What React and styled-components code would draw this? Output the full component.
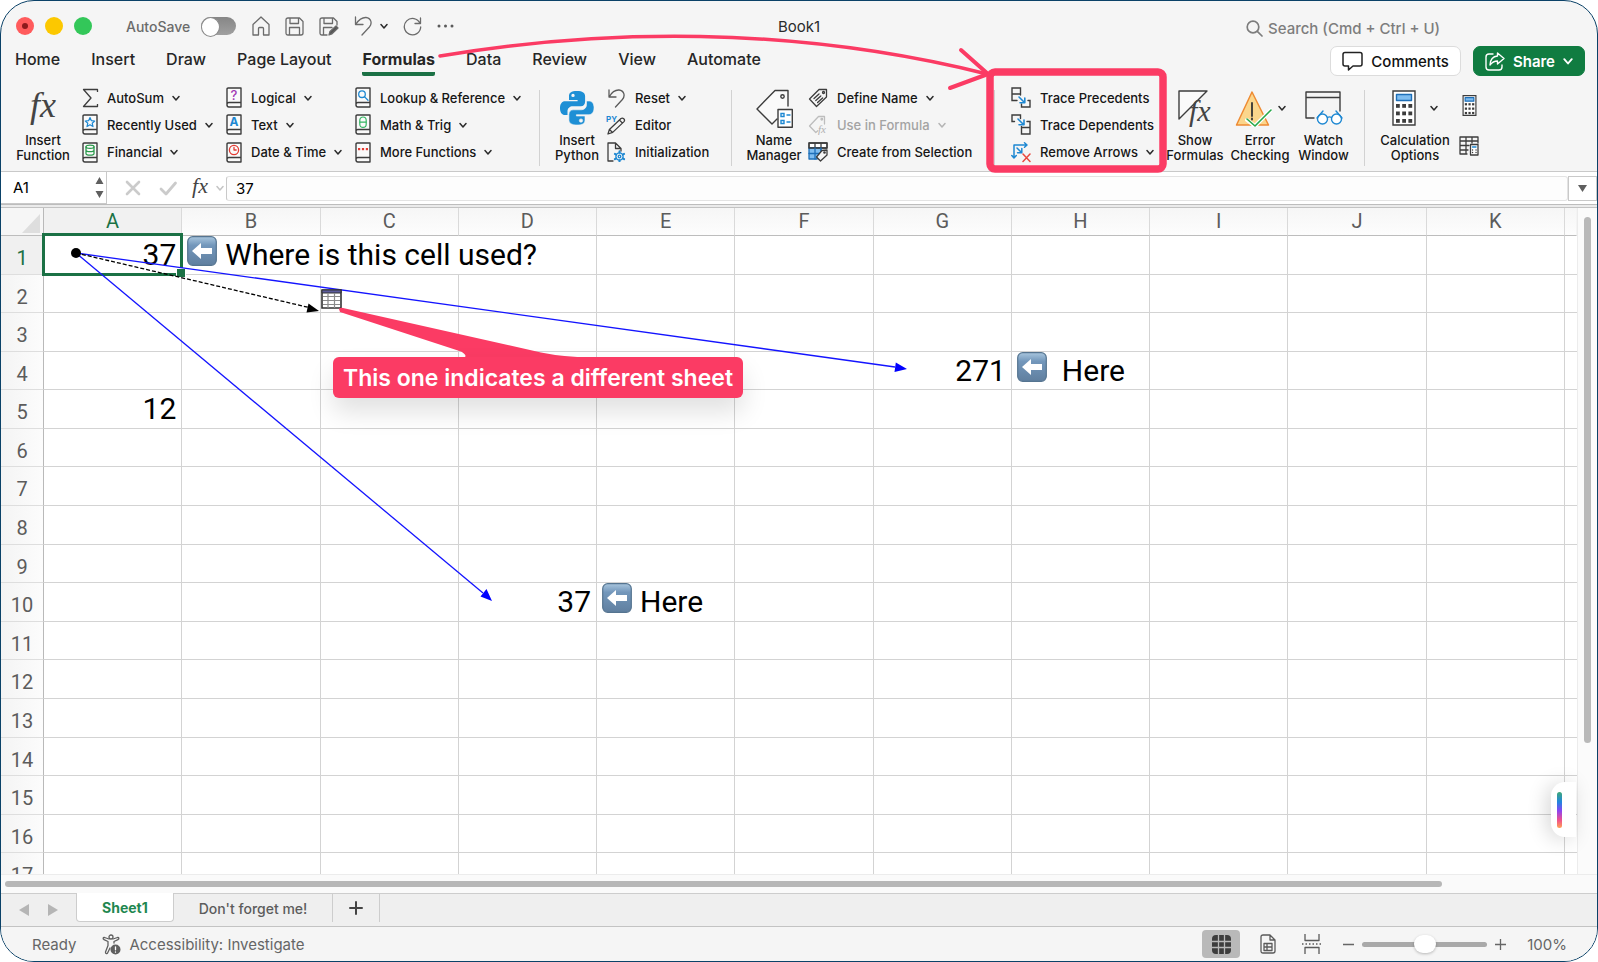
import React, { useState } from 'react'
import styled, { createGlobalStyle } from 'styled-components';


const GlobalStyle = createGlobalStyle`
    * {
        box-sizing: border-box;
    }
    body {
        margin: 0;
        background: #ffffff;
        font-family: Inter, "Liberation Sans", sans-serif;
        color: #1f1f1f;
    }
    button, input {
        font: inherit;
        color: inherit;
        margin: 0;
        padding: 0;
        border: 0;
        background: none;
    }
    svg {
        display: block;
        flex: none;
    }
`;

const Frame = styled.div`
    position: relative;
    display: flex;
    flex-direction: column;
    height: 100vh;
    border: 1px solid #0b4268;
    border-radius: 34px;
    overflow: hidden;
    background: #f5f5f5;
`;

/* ---------- title bar ---------- */

const TitleBar = styled.header`
    display: grid;
    grid-template-columns: 1fr auto 1fr;
    align-items: center;
    height: 44px;
    padding: 6px 15px 0;
`;
const TitleSide = styled.div`
    display: flex;
    align-items: center;
    color: #6b6b6b;
`;
const Lights = styled.div`
    display: flex;
    gap: 11px;
    margin-right: 34px;
`;
const Light = styled.button`
    display: flex;
    align-items: center;
    justify-content: center;
    width: 18px;
    height: 18px;
    border-radius: 50%;
    background: ${props => props.$color};

    &::after {
        content: "";
        width: 6px;
        height: 6px;
        border-radius: 50%;
        background: ${props => props.$dot || 'transparent'};
    }
`;
const AutoSave = styled.label`
    display: flex;
    align-items: center;
    gap: 11px;
    margin-right: 16px;
    font-size: 14px;
    font-weight: 500;
`;
const Toggle = styled.input`
    appearance: none;
    width: 35px;
    height: 18px;
    border-radius: 9px;
    background: linear-gradient(#868686, #a0a0a0);

    &::before {
        content: "";
        display: block;
        width: 17px;
        height: 18px;
        border: 1px solid #8a8a8a;
        border-radius: 50%;
        background: #ffffff;
    }
`;
const IconButton = styled.button`
    display: flex;
    align-items: center;
    justify-content: center;
    gap: 4px;
`;
const QuickTools = styled.div`
    display: flex;
    align-items: center;
    gap: 15px;
`;
const UndoPair = styled.div`
    display: flex;
    align-items: center;
    gap: 8px;
`;
const BookTitle = styled.h1`
    margin: 0;
    font-size: 15px;
    font-weight: 400;
    color: #2b2b2b;
`;
const Search = styled.label`
    display: flex;
    align-items: center;
    gap: 5px;
    width: 336px;
    margin-left: auto;
    padding-top: 4px;
    color: #7d7d7d;
`;
const SearchInput = styled.input`
    flex: 1;
    min-width: 0;
    font-size: 15px;
    font-weight: 500;
    outline: none;

    &::placeholder {
        color: #7d7d7d;
        opacity: 1;
    }
`;

/* ---------- ribbon tabs ---------- */

const TabRow = styled.div`
    display: flex;
    align-items: center;
    justify-content: space-between;
    height: 32px;
    padding: 0 12px 0 14px;
`;
const Tabs = styled.nav`
    display: flex;
    gap: 31px;
`;
const Tab = styled.button`
    height: 30px;
    padding: 3px 0;
    border-bottom: 4px solid ${props => (props.$active ? '#1b7145' : 'transparent')};
    border-radius: 2px;
    font-size: 16px;
    font-weight: ${props => (props.$active ? 700 : 500)};
    line-height: 20px;
    color: #262626;
`;
const TabActions = styled.div`
    display: flex;
    gap: 12px;
`;
const ActionButton = styled.button`
    display: flex;
    align-items: center;
    gap: 8px;
    height: 30px;
    padding: 0 11px;
    border: 1px solid ${props => (props.$primary ? '#107c41' : '#dcdcdc')};
    border-radius: 7px;
    background: ${props => (props.$primary ? '#107c41' : '#ffffff')};
    color: ${props => (props.$primary ? '#ffffff' : '#111111')};
    font-size: 15px;
    font-weight: ${props => (props.$primary ? 600 : 500)};
`;

/* ---------- ribbon ---------- */

const Ribbon = styled.div`
    display: flex;
    padding: 7px 14px 5px 14px;
    border-bottom: 1px solid #c9c9c9;
`;
const Stack = styled.div`
    display: flex;
    flex-direction: column;
    width: ${props => props.$width}px;
    height: 82px;
    margin-left: ${props => props.$before || 0}px;
`;
const SmallButton = styled.button`
    display: flex;
    flex: 1;
    align-items: center;
    gap: 8px;
    white-space: nowrap;
    font-size: 13px;
    font-weight: 500;
    color: ${props => (props.$dim ? '#a3a3a3' : '#161616')};
`;
const IconSlot = styled.span`
    display: flex;
    justify-content: center;
    width: ${props => (props.$wide ? 22 : 18)}px;
    flex: none;
`;
const BigButton = styled.button`
    display: flex;
    flex-direction: column;
    align-items: center;
    gap: 7px;
    width: ${props => props.$width}px;
    height: 82px;
    padding-top: 6px;
    font-size: 13px;
    font-weight: 500;
    line-height: 15px;
    color: #161616;
`;
const BigIcon = styled.span`
    display: flex;
    align-items: center;
    gap: ${props => props.$gap}px;
    height: 36px;
`;
const Divider = styled.div`
    width: 1px;
    height: 76px;
    margin: 6px ${props => props.$after}px 0 ${props => props.$before}px;
    background: #d2d2d2;
`;
const MiniStack = styled.div`
    display: flex;
    flex-direction: column;
    align-items: center;
    gap: 20px;
    padding-top: 11px;
    margin-left: 7px;
`;

/* ---------- formula bar ---------- */

const FormulaBar = styled.div`
    display: flex;
    align-items: center;
    height: 32px;
    background: #ffffff;
`;
const NameBox = styled.div`
    display: flex;
    align-items: center;
    width: 106px;
    height: 32px;
    padding: 0 2px 0 12px;
    border: 1px solid #c9c9c9;
    border-left: 0;
    border-top: 0;
`;
const NameInput = styled.input`
    flex: 1;
    min-width: 0;
    font-size: 15px;
    color: #000000;
    outline: none;
`;
const FormulaTools = styled.div`
    display: flex;
    align-items: center;
    gap: 6px;
    width: 119px;
    padding-left: 11px;
`;
const FormulaInput = styled.input`
    flex: 1;
    height: 25px;
    padding: 1px 0 0 9px;
    border: 1px solid #e3e3e3;
    border-left-color: #c9c9c9;
    border-radius: 3px;
    background: #fdfdfd;
    font-size: 15px;
    color: #000000;
    outline: none;
`;
const ExpandButton = styled.button`
    display: flex;
    align-items: center;
    justify-content: center;
    width: 29px;
    height: 25px;
    border: 1px solid #c9c9c9;
`;
const Seam = styled.div`
    height: 4px;
    border-top: 1px solid #bdbdbd;
    border-bottom: 1px solid #c3c3c3;
    background: #ebebeb;
`;

/* ---------- grid ---------- */

const GridArea = styled.main`
    position: relative;
    display: flex;
    flex: 1;
    min-height: 0;
    overflow: hidden;
    background: #ffffff;
    font-family: Roboto, sans-serif;
`;
const SheetPane = styled.div`
    flex: 1;
    min-width: 0;
`;
const Sheet = styled.table`
    width: 100%;
    height: 684px;
    table-layout: fixed;
    border-collapse: separate;
    border-spacing: 0;
`;
const Col = styled.col`
    width: ${props => props.$width}px;
`;
const CornerCell = styled.th`
    height: 28px;
    padding: 0 3px 2px 0;
    border-right: 1px solid #b9b9b9;
    border-bottom: 1px solid #bdbdbd;
    background: #f6f6f6;
    vertical-align: bottom;

    svg {
        margin-left: auto;
    }
`;
const ColumnHead = styled.th`
    height: 28px;
    padding: 0;
    border-right: 1px solid ${props => (props.$last ? '#f4f4f4' : '#dadada')};
    border-bottom: 1px solid #bdbdbd;
    background: ${props => (props.$active ? '#f1f1f1' : 'linear-gradient(#f6f6f6, #fdfdfd)')};
    font-size: 20px;
    font-weight: 400;
    line-height: 27px;
    color: ${props => (props.$active ? '#1b7145' : '#5c5c5c')};
`;
const RowHead = styled.th`
    padding: 7px 0 0;
    border-right: 1px solid #b9b9b9;
    border-bottom: 1px solid #dedede;
    background: ${props => (props.$active ? '#f0f0f0' : 'linear-gradient(90deg, #f4f4f4, #fcfcfc)')};
    vertical-align: top;
    font-size: 20px;
    font-weight: 400;
    line-height: 30px;
    color: ${props => (props.$active ? '#1b7145' : '#5c5c5c')};
`;
const Cell = styled.td`
    position: relative;
    padding: 0 5px;
    border-right: ${props => (props.$last ? 0 : 1)}px solid #d3d3d3;
    border-bottom: 1px solid #d3d3d3;
    vertical-align: top;
    text-align: ${props => (props.$number ? 'right' : 'left')};
    white-space: nowrap;
    font-size: 30px;
    line-height: 37px;
    color: #000000;
`;
const Selection = styled.span`
    position: absolute;
    inset: -3px -2px -2px -2px;
    z-index: 1;
    border: 3px solid #1b7145;

    &::after {
        content: "";
        position: absolute;
        right: -6px;
        bottom: -5px;
        width: 8px;
        height: 8px;
        border: 1px solid #ffffff;
        background: #1b7145;
    }
`;
const NoteText = styled.span`
    display: flex;
    gap: ${props => (props.$wide ? 15 : 8)}px;
`;
const Overlay = styled.svg`
    position: absolute;
    top: 0;
    left: 0;
    width: 100%;
    height: 100%;
    z-index: 2;
    pointer-events: none;
`;
const Callout = styled.div`
    position: absolute;
    z-index: 3;
    top: 149px;
    left: 332px;
    padding: 2px 10px 0;
    border-radius: 6px;
    background: #fb3b64;
    box-shadow: 0 14px 26px rgba(0, 0, 0, 0.12);
    font-family: Inter, sans-serif;
    font-size: 23px;
    font-weight: 600;
    line-height: 39px;
    color: #ffffff;
    white-space: nowrap;
`;
const SideScroll = styled.div`
    width: 20px;
    padding: 9px 5px 0 6px;
    border-left: 1px solid #ececec;
    background: #fbfbfb;
`;
const SideThumb = styled.div`
    width: 7px;
    height: 80%;
    border-radius: 4px;
    background: #b9b9b9;
`;
const CopilotTab = styled.button`
    position: absolute;
    z-index: 3;
    right: 21px;
    bottom: 37px;
    display: flex;
    align-items: center;
    width: 25px;
    height: 55px;
    padding-left: 6px;
    border-radius: 14px 0 0 14px;
    background: #ffffff;
    box-shadow: -4px 2px 20px rgba(0, 0, 0, 0.16);

    &::before {
        content: "";
        width: 5px;
        height: 36px;
        border-radius: 3px;
        background: linear-gradient(#3da877, #2185e0 28%, #8b45f2 52%, #f0518c 78%, #ffa154);
    }
`;
const BottomScroll = styled.div`
    height: 19px;
    padding: 6px 155px 0 4px;
    border-top: 1px solid #ececec;
    background: #fafafa;
`;
const BottomThumb = styled.div`
    height: 6px;
    border-radius: 3px;
    background: #b7b7b7;
`;

/* ---------- sheet tabs and status bar ---------- */

const SheetBar = styled.div`
    display: flex;
    height: 33px;
    border-top: 1px solid #cdcdcd;
    background: #efefef;
`;
const SheetArrows = styled.div`
    display: flex;
    align-items: center;
    gap: 19px;
    width: 75px;
    padding-left: 18px;
`;
const SheetTab = styled.button`
    height: 28px;
    padding: 0 ${props => (props.$add ? 16 : 25)}px;
    border-right: 1px solid #cdcdcd;
    font-size: 14px;
    font-weight: 500;
    color: #5c5c5c;
    ${props => props.$active && `
        margin-top: -1px;
        height: 29px;
        border: 1px solid #cdcdcd;
        border-top: 0;
        border-radius: 0 0 4px 4px;
        background: #ffffff;
        font-weight: 700;
        color: #1f8750;
    `}
`;
const StatusBar = styled.footer`
    display: flex;
    align-items: center;
    justify-content: space-between;
    height: 35px;
    padding: 0 30px 0 31px;
    border-top: 1px solid #c3c3c3;
    background: #f5f5f5;
    font-size: 15px;
    color: #666666;
`;
const StatusGroup = styled.div`
    display: flex;
    align-items: center;
    gap: ${props => props.$gap}px;
`;
const StatusButton = styled.button`
    display: flex;
    align-items: center;
    gap: 7px;
`;
const ViewButton = styled.button`
    display: flex;
    align-items: center;
    justify-content: center;
    width: ${props => (props.$active ? 38 : 32)}px;
    height: 28px;
    border-radius: 4px;
    background: ${props => (props.$active ? '#b9b9b9' : 'transparent')};
`;
const ZoomSlider = styled.input`
    appearance: none;
    width: 125px;
    height: 5px;
    border-radius: 3px;
    background: #a9a9a9;

    &::-webkit-slider-thumb {
        appearance: none;
        width: 22px;
        height: 18px;
        border-radius: 9px;
        background: #ffffff;
        box-shadow: 0 1px 3px rgba(0, 0, 0, 0.25);
    }
`;
const ZoomValue = styled.span`
    width: 46px;
    text-align: right;
`;

/* ---------- annotation over the ribbon ---------- */

const Markup = styled.svg`
    position: absolute;
    top: 0;
    left: 0;
    width: 100%;
    height: 180px;
    z-index: 4;
    pointer-events: none;
`;


const Chevron = ({ color = '#2b2b2b', size = 8 }) => (
    <svg width={size} height={size} viewBox="0 0 8 8" fill="none" stroke={color} strokeWidth="1.5" strokeLinecap="round" strokeLinejoin="round">
        <path d="M1 2.5 4 6l3-3.5" />
    </svg>
)

const Line = ({ w, h, box, color = '#6b6b6b', stroke = 1.3, children }) => (
    <svg width={w} height={h} viewBox={box || `0 0 ${w} ${h}`} fill="none" stroke={color} strokeWidth={stroke} strokeLinejoin="round" strokeLinecap="round">
        {children}
    </svg>
)

// small book outline shared by the function library icons
const Book = ({ children }) => (
    <Line w={16} h={21} color="#3d3d3d" stroke={1.4}>
        <path d="M1 18.500V2.200Q1 1 2.200 1H15v14.500H3Q1 15.500 1 17.700T3 20h12v-4.500" fill="#fafafa" />
        {children}
    </Line>
)

const bookArt = {
    star: <path d="m8 3.500 1.400 3.200 3.300.3-2.500 2.200.8 3.400L8 10.800l-3 1.800.8-3.400L3.300 7l3.300-.3z" stroke="#1e88d2" strokeWidth="1.200" />,
    coins: <g stroke="#2b9a4c" strokeWidth="1.300"><ellipse cx="8" cy="4.800" rx="4" ry="1.600" /><path d="M4 4.800v6.600c0 2.200 8 2.200 8 0V4.800M4 8c0 2.200 8 2.200 8 0" /></g>,
    question: <text x="8" y="13" textAnchor="middle" fontSize="13" fontFamily="Inter" fill="#a13bb5" stroke="none">?</text>,
    letter: <text x="8" y="12" textAnchor="middle" fontSize="12" fontWeight="700" fontFamily="Inter" fill="#1e88d2" stroke="none">A</text>,
    clock: <g stroke="#e33b33" strokeWidth="1.300"><circle cx="8" cy="8" r="4.600" /><path d="M8 5.400V8h2.200" /></g>,
    lens: <g stroke="#1e88d2" strokeWidth="1.300"><circle cx="7" cy="7.200" r="3.300" /><path d="m9.400 9.600 3.600 3.600" /></g>,
    theta: <g stroke="#33b562" strokeWidth="1.200"><rect x="4.800" y="3" width="6.400" height="10.400" rx="3.200" /><path d="M5 8.200h6" /></g>,
    dots: <g fill="#e33b33" stroke="none"><rect x="3" y="6" width="2.200" height="2.200" /><rect x="6.900" y="6" width="2.200" height="2.200" /><rect x="10.800" y="6" width="2.200" height="2.200" /></g>,
}

const Fx = ({ size, w, h, y }) => (
    <svg width={w} height={h} viewBox={`0 0 ${w} ${h}`}>
        <text x={w / 2} y={y} textAnchor="middle" fontFamily="Liberation Serif, serif" fontStyle="italic" fontSize={size} fill="#444444">fx</text>
    </svg>
)

const Python = () => (
    <svg width="34" height="34" viewBox="0 0 34 34" fill="#1e8fd5">
        <path d="M17 0c-6 0-8 2-8 5v4h8.600v1.300H5C2 10.300 0 13 0 17.200S2 24 5 24h2.500v-3.800c0-3 2.400-5 5.200-5h8.200c2.500 0 4.200-2 4.200-4.500V5c0-3-2.600-5-8.100-5Zm-4 2.700a1.700 1.700 0 1 1 0 3.400 1.700 1.700 0 0 1 0-3.400Z" />
        <path d="M17 34c6 0 8-2 8-5v-4h-8.600v-1.300H29c3 0 5-2.700 5-6.900S32 10 29 10h-2.500v3.800c0 3-2.400 5-5.200 5h-8.200c-2.500 0-4.200 2-4.200 4.500V29c0 3 2.600 5 8.100 5Zm4-2.700a1.700 1.700 0 1 1 0-3.400 1.700 1.700 0 0 1 0 3.400Z" stroke="#f5f5f5" strokeWidth="0.600" />
    </svg>
)

const icons = {
    sigma: <Line w={17} h={20} color="#3d3d3d" stroke={1.3}><path d="M15.500 4V1.500h-14L9 10l-7.500 8.500h14V16" strokeLinecap="butt" /></Line>,
    reset: <Line w={18} h={20} color="#5a5a5a"><path d="M2 2v7h7M2.300 8.700C5 4 8.500 1.800 12 2c5.300.5 6.400 6 3.400 9.500L8.500 19" /></Line>,
    editor: (
        <Line w={20} h={20} color="#3d3d3d">
            <text x="0" y="7" fontSize="8" fontWeight="700" fontFamily="Inter" fill="#1e88d2" stroke="none">PY</text>
            <path d="m2 19 1.400-4.600L15 3.600c1.800-1.400 4.600.9 3 3L6.700 17.400 2 19ZM13.400 5l3.100 3.100M3.400 14.400l3.300 3" />
        </Line>
    ),
    init: (
        <Line w={20} h={20} color="#3d3d3d">
            <path d="M7 19H2V1h7.500L15 6.500V9M9.500 1v5.500H15" />
            <g stroke="#1e88d2"><circle cx="13.500" cy="14.500" r="3.600" /><circle cx="13.500" cy="14.500" r="1.300" /><path d="M13.500 9.200v1.500M13.500 18.300v1.500M8.900 11.900l1.300.8M16.800 16.400l1.300.8M8.900 17.200l1.300-.8M16.800 12.700l1.300-.8" strokeWidth="2" /></g>
        </Line>
    ),
    define: <Line w={20} h={20} color="#3d3d3d"><path d="M11 1.500h7.500V9L8.500 18.500 1.500 11Z" /><circle cx="15.500" cy="4.500" r="1" /><path d="m6 10.500 5-4.500M7.800 12.500l5-4.500M9.600 14.500l5-4.500" /></Line>,
    useIn: <Line w={20} h={20} color="#bdbdbd"><path d="M16.500 9V1.500h-6L1.500 11l6.300 6.500 2-1.800" /><circle cx="13.800" cy="4.300" r=".8" /><text x="10" y="18" fontSize="11" fontStyle="italic" fontFamily="Liberation Serif" fill="#b0b0b0" stroke="none">fx</text></Line>,
    create: (
        <Line w={20} h={20} color="#3d3d3d">
            <path d="M1 1h18v5H1z" fill="#ffffff" />
            <path d="M1 6h12v6l-4 5H1z" fill="#7fbdf0" stroke="#1e6fb8" />
            <path d="M1 1h18v5H1zM7 1v5M13 1v5" />
            <path d="M7 6v11M13 6v3M1 11.500h10" stroke="#1e6fb8" />
            <path d="m14 8.500 5-.5v5l-6.500 6-4-4Z" fill="#f5f5f5" /><circle cx="16.500" cy="10.500" r=".7" />
        </Line>
    ),
    precedents: (
        <Line w={20} h={21} color="#3d3d3d" stroke={1.4}>
            <path d="M1 1h8.500v6H1zM1 7v6.500h5M9.500 7v1M17 13.500h2V20h-8.500v-3" strokeLinejoin="miter" />
            <path d="m8 10 5.500 5.500M13.800 11v4.700H9" stroke="#1e88d2" strokeWidth="1.600" />
        </Line>
    ),
    dependents: (
        <Line w={20} h={21} color="#3d3d3d" stroke={1.4}>
            <path d="M3.500 7.500H1V1h8.500v3.500M10.500 13.500H19V20h-8.500zM19 13.500v-6h-3M10.500 13.500v-1" strokeLinejoin="miter" />
            <path d="m7 5 5.500 5.500M13 6v4.800H8" stroke="#1e88d2" strokeWidth="1.600" />
        </Line>
    ),
    remove: (
        <Line w={20} h={21} color="#1e88d2" stroke={1.5}>
            <path d="M3 16V3h13M13.500.8 16 3l-2.500 2.300M.8 13.500 3 16l2.300-2.500M6 6l4.500 4.500M10.800 6.500v4.300H6.500" />
            <path d="m12 12 7 7.500M19 12l-7 7.500" stroke="#e8483f" />
        </Line>
    ),
}

const NameManagerIcon = () => (
    <Line w={37} h={39} color="#3d3d3d" stroke={1.4}>
        <path d="M32 17V1.500H19L1 20l15 15 5-5" fill="#fafafa" /><circle cx="26.500" cy="7.500" r="1.700" />
        <path d="M22 20.500h14.300v17.800H22z" fill="#ffffff" />
        <path d="M25 24.500h3v3h-3zM25 31.500h3v3h-3zM31 26h3M31 33h3" stroke="#1e88d2" strokeLinejoin="miter" />
    </Line>
)

const ShowFormulasIcon = () => (
    <Line w={34} h={37} color="#3d3d3d" stroke={1.4}>
        <path d="M1 29V1h28Z" fill="#fafafa" />
        <text x="11" y="31" fontSize="30" fontStyle="italic" fontFamily="Liberation Serif" fill="#444444" stroke="none">fx</text>
    </Line>
)

const ErrorIcon = () => (
    <Line w={37} h={37} color="#ee8b33" stroke={1.5}>
        <path d="M17 2 1.500 35h32Z" fill="#fbd68c" />
        <path d="M17 13v13M17 28.500v1" stroke="#333333" strokeWidth="1.800" />
        <path d="m12 30 8 6L36 20" stroke="#ffffff" strokeWidth="4" />
        <path d="m12 29 8 7L36 20" stroke="#27a84a" strokeWidth="1.600" />
    </Line>
)

const WatchIcon = () => (
    <Line w={38} h={34} color="#3d3d3d" stroke={1.4}>
        <path d="M9 27H1V1h34v19M1 6.500h34" />
        <g stroke="#1e88d2"><circle cx="17.500" cy="28" r="5" fill="#ffffff" /><circle cx="31.500" cy="28" r="5" fill="#ffffff" /><path d="M22.500 26.500q2-1.200 4 0M12 27l6-7M37 27l-6-7" /></g>
    </Line>
)

const CalcIcon = ({ w, h }) => (
    <Line w={w} h={h} box="0 0 24 36" color="#3d3d3d" stroke={w > 20 ? 1.4 : 2}>
        <path d="M1 1h22v34H1z" fill="#ffffff" strokeLinejoin="miter" />
        <path d="M4.500 4.500h15v6h-15z" fill="#7fbdf0" stroke="#1e6fb8" />
        {[14, 21.5, 29].map(y => [4, 10.2, 16.4].map(x => (
            <rect key={x + '-' + y} x={x} y={y} width="3.800" height="3.800" fill="#3d3d3d" stroke="none" />
        )))}
    </Line>
)

const CalcSheetIcon = () => (
    <Line w={20} h={20} color="#3d3d3d" stroke={1.3}>
        <path d="M1 1h18v6M1 1v17h7M1 5h18M1 9.500h9M1 14h8M7 1v16M13 1v6" />
        <path d="M11.500 8.500H19V19h-7.500z" fill="#ffffff" /><path d="M13.500 11h3.500" stroke="#1e88d2" /><path d="M13.500 14h.1M17 14h.1M13.500 16.500h.1M17 16.500h.1" />
    </Line>
)

const ArrowEmoji = () => (
    <svg width="30" height="30" viewBox="0 0 30 30">
        <defs>
            <linearGradient id="tile" x1="0" y1="0" x2="0" y2="1">
                <stop offset="0" stopColor="#a9c6de" />
                <stop offset="0.300" stopColor="#7397bb" />
                <stop offset="1" stopColor="#607f9f" />
            </linearGradient>
        </defs>
        <rect x="0.700" y="0.700" width="28.600" height="28.600" rx="5" fill="url(#tile)" stroke="#557490" strokeWidth="1.200" />
        <path d="M5 15 14 7v5h11v6H14v5Z" fill="#ffffff" />
    </svg>
)

const SmallCommand = ({ icon, label, menu, dim, wide }) => (
    <SmallButton $dim={dim}>
        <IconSlot $wide={wide}>{icon}</IconSlot>
        {label}
        {menu && <Chevron color={dim ? '#b5b5b5' : undefined} />}
    </SmallButton>
)

const BigCommand = ({ icon, lines, menu, width, gap = 6 }) => (
    <BigButton $width={width}>
        <BigIcon $gap={gap}>{icon}{menu && <Chevron />}</BigIcon>
        <span>{lines[0]}<br />{lines[1]}</span>
    </BigButton>
)

const tabNames = ['Home', 'Insert', 'Draw', 'Page Layout', 'Formulas', 'Data', 'Review', 'View', 'Automate']
const columns = ['A', 'B', 'C', 'D', 'E', 'F', 'G', 'H', 'I', 'J', 'K']
const rows = Array.from({ length: 17 }, (_, i) => i + 1)

const cells = {
    A1: { number: true, value: '37' },
    B1: { note: 'Where is this cell used?', span: 3 },
    G4: { number: true, value: '271' },
    H4: { note: 'Here', wide: true },
    A5: { number: true, value: '12' },
    D10: { number: true, value: '37' },
    E10: { note: 'Here' },
}


function SheetCells({ row }) {
    const out = []
    for (let i = 0; i < columns.length; i++) {
        const id = columns[i] + row
        const cell = cells[id] || {}
        out.push(
            <Cell key={id} $number={cell.number} colSpan={cell.span}>
                {cell.note ? <NoteText $wide={cell.wide}><ArrowEmoji />{cell.note}</NoteText> : cell.value}
                {id === 'A1' && <Selection />}
            </Cell>
        )
        // long notes run over the empty cells to their right
        if (cell.span) i += cell.span - 1
    }
    return out
}

export default function App() {
    const [tab, setTab] = useState('Formulas')
    const [formula, setFormula] = useState('37')
    const [zoom, setZoom] = useState(100)

    return (
        <Frame>
            <GlobalStyle />
            <TitleBar>
                <TitleSide>
                    <Lights>
                        <Light $color="#ff5b5c" $dot="#8c1a1c" aria-label="Close" />
                        <Light $color="#fcc800" aria-label="Minimize" />
                        <Light $color="#33c759" aria-label="Full screen" />
                    </Lights>
                    <AutoSave>AutoSave <Toggle type="checkbox" /></AutoSave>
                    <QuickTools>
                        <IconButton aria-label="Home">
                            <Line w={18} h={20}><path d="M1 8.500 9 1l8 7.500V19h-5.500v-6.500q0-1-1-1h-3q-1 0-1 1V19H1Z" /></Line>
                        </IconButton>
                        <IconButton aria-label="Save">
                            <Line w={19} h={19}><path d="M1 3q0-2 2-2h11.500L18 4.500V16q0 2-2 2H3q-2 0-2-2ZM5 1v5.500h8.500V1M4.500 18v-7.500h10V18" /></Line>
                        </IconButton>
                        <IconButton aria-label="Save a copy">
                            <Line w={20} h={19}><path d="M8 18H3q-2 0-2-2V3q0-2 2-2h11.500L18 4.500V8M5 1v5.500h8.500V1M4.500 18v-7.500H13" /><path d="m10 18 1-3.500 6-5.500 2 2-6 5.800Z" fill="#555555" /></Line>
                        </IconButton>
                        <UndoPair>
                            <IconButton aria-label="Undo">
                                <Line w={18} h={20}><path d="M1.500 1v7.500H9M2 8C5 3.500 8.500 1.300 12 1.500c5.300.5 6.400 6 3.400 9.500L8 19" /></Line>
                            </IconButton>
                            <IconButton aria-label="Undo history"><Chevron /></IconButton>
                        </UndoPair>
                        <IconButton aria-label="Redo">
                            <Line w={19} h={19}><path d="M17.500 1v5.500H12M17 6.300A8.200 8.200 0 1 0 17.700 10" /></Line>
                        </IconButton>
                        <IconButton aria-label="More">
                            <svg width="17" height="4" viewBox="0 0 17 4" fill="#5a5a5a"><circle cx="2" cy="2" r="1.500" /><circle cx="8.500" cy="2" r="1.500" /><circle cx="15" cy="2" r="1.500" /></svg>
                        </IconButton>
                    </QuickTools>
                </TitleSide>
                <BookTitle>Book1</BookTitle>
                <Search>
                    <Line w={17} h={17} color="#7d7d7d" stroke={1.7}><circle cx="7" cy="7" r="5.800" /><path d="m11.300 11.300 4.700 4.700" /></Line>
                    <SearchInput placeholder="Search (Cmd + Ctrl + U)" aria-label="Search" />
                </Search>
            </TitleBar>

            <TabRow>
                <Tabs>
                    {tabNames.map(name => (
                        <Tab key={name} $active={name === tab} onClick={() => setTab(name)}>{name}</Tab>
                    ))}
                </Tabs>
                <TabActions>
                    <ActionButton>
                        <Line w={21} h={20} color="#222222" stroke={1.5}><path d="M3 1.500h15q2 0 2 2V13q0 2-2 2h-7l-4.500 4V15H3q-2 0-2-2V3.500q0-2 2-2Z" /></Line>
                        Comments
                    </ActionButton>
                    <ActionButton $primary>
                        <Line w={20} h={19} color="#ffffff" stroke={1.4}><path d="M8 2H4Q1 2 1 5v10q0 3 3 3h10q3 0 3-3v-2" /><path d="M12.500 1 19 6.500 12.500 12V9Q8 9 5 13q.5-8.500 7.500-9Z" /></Line>
                        Share
                        <Chevron color="#ffffff" size={10} />
                    </ActionButton>
                </TabActions>
            </TabRow>

            <Ribbon>
                <BigCommand width={56} icon={<Fx size={36} w={48} h={36} y={27} />} lines={['Insert', 'Function']} />
                <Stack $width={144} $before={10}>
                    <SmallCommand icon={icons.sigma} label="AutoSum" menu />
                    <SmallCommand icon={<Book>{bookArt.star}</Book>} label="Recently Used" menu />
                    <SmallCommand icon={<Book>{bookArt.coins}</Book>} label="Financial" menu />
                </Stack>
                <Stack $width={129}>
                    <SmallCommand icon={<Book>{bookArt.question}</Book>} label="Logical" menu />
                    <SmallCommand icon={<Book>{bookArt.letter}</Book>} label="Text" menu />
                    <SmallCommand icon={<Book>{bookArt.clock}</Book>} label="Date & Time" menu />
                </Stack>
                <Stack $width={169}>
                    <SmallCommand icon={<Book>{bookArt.lens}</Book>} label="Lookup & Reference" menu />
                    <SmallCommand icon={<Book>{bookArt.theta}</Book>} label="Math & Trig" menu />
                    <SmallCommand icon={<Book>{bookArt.dots}</Book>} label="More Functions" menu />
                </Stack>
                <Divider $before={16} $after={14} />
                <BigCommand width={46} icon={<Python />} lines={['Insert', 'Python']} />
                <Stack $width={118} $before={5}>
                    <SmallCommand wide icon={icons.reset} label="Reset" menu />
                    <SmallCommand wide icon={icons.editor} label="Editor" />
                    <SmallCommand wide icon={icons.init} label="Initialization" />
                </Stack>
                <Divider $before={8} $after={13} />
                <BigCommand width={58} icon={<NameManagerIcon />} lines={['Name', 'Manager']} />
                <Stack $width={176} $before={4}>
                    <SmallCommand wide icon={icons.define} label="Define Name" menu />
                    <SmallCommand wide icon={icons.useIn} label="Use in Formula" menu dim />
                    <SmallCommand wide icon={icons.create} label="Create from Selection" />
                </Stack>
                <Divider $before={11} $after={15} />
                <Stack $width={156}>
                    <SmallCommand wide icon={icons.precedents} label="Trace Precedents" />
                    <SmallCommand wide icon={icons.dependents} label="Trace Dependents" />
                    <SmallCommand wide icon={icons.remove} label="Remove Arrows" menu />
                </Stack>
                <BigCommand width={58} icon={<ShowFormulasIcon />} lines={['Show', 'Formulas']} />
                <BigCommand width={72} icon={<ErrorIcon />} lines={['Error', 'Checking']} menu />
                <BigCommand width={55} icon={<WatchIcon />} lines={['Watch', 'Window']} />
                <Divider $before={13} $after={13} />
                <BigCommand width={74} icon={<CalcIcon w={24} h={36} />} lines={['Calculation', 'Options']} menu gap={14} />
                <MiniStack>
                    <IconButton aria-label="Calculate now"><CalcIcon w={15} h={21} /></IconButton>
                    <IconButton aria-label="Calculate sheet"><CalcSheetIcon /></IconButton>
                </MiniStack>
            </Ribbon>

            <FormulaBar>
                <NameBox>
                    <NameInput defaultValue="A1" aria-label="Name box" />
                    <svg width="9" height="22" viewBox="0 0 9 22" fill="#5f5f5f"><path d="M4.500 0 8.500 7h-8ZM4.500 21 .5 14h8Z" /></svg>
                </NameBox>
                <FormulaTools>
                    <IconButton aria-label="Cancel"><Line w={30} h={16} box="-7 0 30 16" color="#cbcbcb" stroke={2.6}><path d="m2 2 12 12M14 2 2 14" /></Line></IconButton>
                    <IconButton aria-label="Enter"><Line w={28} h={16} box="-5 0 28 16" color="#cbcbcb" stroke={2.8}><path d="m2 9 5 5L16.500 3" /></Line></IconButton>
                    <IconButton aria-label="Insert function"><Fx size={22} w={24} h={26} y={18} /><Chevron color="#c4c4c4" /></IconButton>
                </FormulaTools>
                <FormulaInput value={formula} onChange={e => setFormula(e.target.value)} aria-label="Formula" />
                <ExpandButton aria-label="Expand formula bar">
                    <svg width="9" height="7" viewBox="0 0 9 7" fill="#5f5f5f"><path d="M0 0h9L4.500 7Z" /></svg>
                </ExpandButton>
            </FormulaBar>
            <Seam />

            <GridArea>
                <SheetPane>
                    <Sheet>
                        <colgroup>
                            <Col $width={43} />
                            {columns.map(c => <col key={c} />)}
                            <Col $width={12} />
                        </colgroup>
                        <thead>
                            <tr>
                                <CornerCell>
                                    <svg width="18" height="19" viewBox="0 0 18 19" fill="#dedede"><path d="M18 0v19H0Z" /></svg>
                                </CornerCell>
                                {columns.map(c => <ColumnHead key={c} $active={c === 'A'}>{c}</ColumnHead>)}
                                <ColumnHead $last />
                            </tr>
                        </thead>
                        <tbody>
                            {rows.map(row => (
                                <tr key={row}>
                                    <RowHead $active={row === 1}>{row}</RowHead>
                                    <SheetCells row={row} />
                                    <Cell $last />
                                </tr>
                            ))}
                        </tbody>
                    </Sheet>
                </SheetPane>
                <SideScroll><SideThumb /></SideScroll>

                <Overlay>
                    <g stroke="#1414ff" strokeWidth="1.300" fill="none">
                        <path d="M75 45 894 159" />
                        <path d="M75 45 482 385" />
                    </g>
                    <path d="M75 45 308 99.500" stroke="#000000" strokeWidth="1.300" strokeDasharray="4 2" fill="none" />
                    <path d="m906 161-12.500 3 1.300-9.500ZM491 393l-11.500-4.500 6-7.500Z" fill="#0000ff" />
                    <path d="m318 103-12.500 1.500 2-9Z" />
                    <circle cx="75" cy="45" r="5" />
                    <g transform="translate(320 81)">
                        <path d="M1 1h19v18H1z" fill="#ffffff" stroke="#333333" strokeWidth="1.600" />
                        <path d="M1 1h19v3H1z" fill="#5c5c9c" stroke="#333333" />
                        <path d="M2 7.500h17M2 11.500h17M2 15.500h17M7 4v15M13.500 4v15" stroke="#8a8a8a" strokeWidth="1.200" />
                    </g>
                    <path d="M338 101q1-2 4-1L540 144.500Q562 149 590 149.500V152H464v-3q2-2-4-5.500L339 104Z" fill="#fb3b64" />
                </Overlay>
                <Callout>This one indicates a different sheet</Callout>
                <CopilotTab aria-label="Copilot" />
            </GridArea>
            <BottomScroll><BottomThumb /></BottomScroll>

            <SheetBar>
                <SheetArrows>
                    <IconButton aria-label="Previous sheet"><svg width="10" height="12" viewBox="0 0 10 12" fill="#b5b5b5"><path d="M10 0v12L0 6Z" /></svg></IconButton>
                    <IconButton aria-label="Next sheet"><svg width="10" height="12" viewBox="0 0 10 12" fill="#b5b5b5"><path d="M0 0v12l10-6Z" /></svg></IconButton>
                </SheetArrows>
                <SheetTab $active>Sheet1</SheetTab>
                <SheetTab>Don't forget me!</SheetTab>
                <SheetTab $add aria-label="Add sheet">
                    <Line w={14} h={14} color="#444444" stroke={2}><path d="M7 1v12M1 7h12" /></Line>
                </SheetTab>
            </SheetBar>

            <StatusBar>
                <StatusGroup $gap={26}>
                    <span>Ready</span>
                    <StatusButton>
                        <Line w={20} h={21} color="#5f5f5f" stroke={1.3}>
                            <circle cx="9" cy="3" r="2" />
                            <path d="M7 5 2.500 3.500C1 3.200.6 5 2 5.600L6 7.500v4L3.500 18c-.4 1.600 1.600 2.200 2.200.8L8 14M11 5l4.500-1.500c1.500-.3 1.900 1.500.5 2.100L12 7.500V9" />
                            <circle cx="13.500" cy="15.500" r="5" fill="#5f5f5f" stroke="none" />
                            <path d="M13.500 12.800v3M13.500 18v.2" stroke="#ffffff" />
                        </Line>
                        Accessibility: Investigate
                    </StatusButton>
                </StatusGroup>
                <StatusGroup $gap={15}>
                    <StatusGroup $gap={12}>
                        <ViewButton $active aria-label="Normal view">
                            <svg width="19" height="19" viewBox="0 0 19 19"><rect width="19" height="19" rx="4" fill="#3d3d3d" /><path d="M6.500 0v19M12.500 0v19M0 6.500h19M0 12.500h19" stroke="#b9b9b9" strokeWidth="1.300" /></svg>
                        </ViewButton>
                        <ViewButton aria-label="Page layout view">
                            <Line w={16} h={20} color="#5a5a5a"><path d="M1 3q0-2 2-2h7l5 5v11q0 2-2 2H3q-2 0-2-2ZM10 1v5h5M4 9.500h8v7H4zM4 13h8M7 9.500v7" /></Line>
                        </ViewButton>
                        <ViewButton aria-label="Page break view">
                            <Line w={20} h={20} color="#5a5a5a"><path d="M3 0v6.500h14V0M3 20v-6.500h14V20" /><path d="M0 10h20" strokeDasharray="1.500 2" strokeLinecap="butt" /></Line>
                        </ViewButton>
                    </StatusGroup>
                    <StatusGroup $gap={8}>
                        <IconButton aria-label="Zoom out"><Line w={11} h={11} color="#666666"><path d="M0 5.500h11" /></Line></IconButton>
                        <ZoomSlider type="range" min="0" max="200" value={zoom} onChange={e => setZoom(e.target.value)} aria-label="Zoom" />
                        <IconButton aria-label="Zoom in"><Line w={11} h={11} color="#666666"><path d="M0 5.500h11M5.500 0v11" /></Line></IconButton>
                    </StatusGroup>
                    <ZoomValue>{zoom}%</ZoomValue>
                </StatusGroup>
            </StatusBar>

            <Markup fill="none" stroke="#fb3b64" strokeLinecap="round">
                <path d="M439 55C600 28 790 24 986 73" strokeWidth="3.500" />
                <path d="M960 49 987 73 949 87" strokeWidth="4" strokeLinejoin="round" />
                <rect x="989" y="71" width="173" height="97" rx="5" strokeWidth="7.500" />
            </Markup>
        </Frame>
    )
}
